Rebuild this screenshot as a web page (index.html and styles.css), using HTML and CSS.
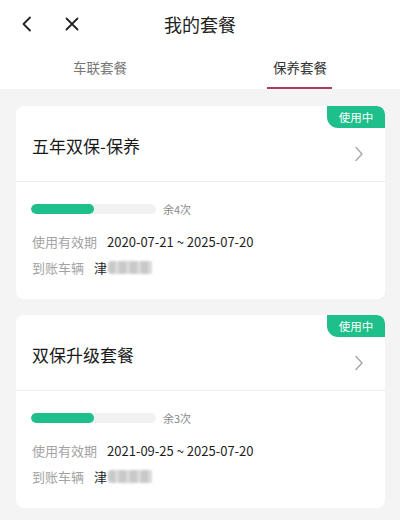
FILE: index.html
```html
<!DOCTYPE html>
<html lang="zh-CN">
<head>
    <meta charset="UTF-8">
    <title>我的套餐</title>
    <link rel="stylesheet" href="styles.css">
</head>
<body>

<div class="header">
    <div class="header-left">
        <svg class="icon" width="14" height="16" viewBox="0 0 14 16">
            <path d="M10 1.5 L3.5 8 L10 14.5" fill="none" stroke="#222" stroke-width="1.8" stroke-linecap="round" stroke-linejoin="round"/>
        </svg>
        <svg class="icon close" width="14" height="14" viewBox="0 0 14 14">
            <path d="M1.5 1.5 L12.5 12.5 M12.5 1.5 L1.5 12.5" fill="none" stroke="#222" stroke-width="1.8" stroke-linecap="round"/>
        </svg>
    </div>
    <div class="header-title">我的套餐</div>
    <div></div>
</div>

<div class="tabs">
    <div class="tab">车联套餐</div>
    <div class="tab active">保养套餐</div>
</div>

<div class="list">
    <div class="card">
        <span class="badge">使用中</span>
        <div class="card-top">
            <div class="card-title">五年双保-保养</div>
            <svg class="chevron" width="10" height="16" viewBox="0 0 10 16">
                <path d="M2 1.5 L8 8 L2 14.5" fill="none" stroke="#a6a6a6" stroke-width="1.4" stroke-linecap="round" stroke-linejoin="round"/>
            </svg>
        </div>
        <div class="card-body">
            <div class="progress-row">
                <div class="track"><div class="fill" style="width: 50%;"></div></div>
                <span class="remain">余4次</span>
            </div>
            <div class="info-row">
                <span class="label">使用有效期</span>
                <span class="value">2020-07-21 ~ 2025-07-20</span>
            </div>
            <div class="info-row">
                <span class="label">到账车辆</span>
                <span class="value">津<span class="masked"></span></span>
            </div>
        </div>
    </div>

    <div class="card">
        <span class="badge">使用中</span>
        <div class="card-top">
            <div class="card-title">双保升级套餐</div>
            <svg class="chevron" width="10" height="16" viewBox="0 0 10 16">
                <path d="M2 1.5 L8 8 L2 14.5" fill="none" stroke="#a6a6a6" stroke-width="1.4" stroke-linecap="round" stroke-linejoin="round"/>
            </svg>
        </div>
        <div class="card-body">
            <div class="progress-row">
                <div class="track"><div class="fill" style="width: 50%;"></div></div>
                <span class="remain">余3次</span>
            </div>
            <div class="info-row">
                <span class="label">使用有效期</span>
                <span class="value">2021-09-25 ~ 2025-07-20</span>
            </div>
            <div class="info-row">
                <span class="label">到账车辆</span>
                <span class="value">津<span class="masked"></span></span>
            </div>
        </div>
    </div>
</div>

</body>
</html>
```

FILE: styles.css
```css
body {
    margin: 0;
    font-family: "Noto Sans CJK SC", "Noto Sans", sans-serif;
    background-color: #f4f4f4;
    color: #222;
}
.header {
    display: grid;
    grid-template-columns: 1fr auto 1fr;
    align-items: center;
    height: 48px;
    background: #fff;
}
.header-left {
    display: flex;
    align-items: center;
    padding-left: 20px;
}
.icon {
    display: block;
}
.close {
    margin-left: 31px;
}
.header-title {
    font-size: 18px;
    line-height: 24px;
    color: #222;
}
.tabs {
    display: flex;
    height: 41px;
    background: #fff;
}
.tab {
    flex: 1;
    display: flex;
    justify-content: center;
    align-items: center;
    padding-bottom: 3px;
    font-size: 13.5px;
    color: #777;
}
.tab.active {
    color: #333;
    position: relative;
}
.tab.active::after {
    content: "";
    position: absolute;
    left: 50%;
    bottom: 0;
    width: 65px;
    margin-left: -33px;
    height: 2px;
    background: #a93c62;
}
.list {
    display: flex;
    flex-direction: column;
    gap: 16px;
    padding: 17px 15px 0 16px;
}
.card {
    position: relative;
    background: #fff;
    border-radius: 8px;
    overflow: hidden;
}
.badge {
    position: absolute;
    top: 0;
    right: 0;
    width: 58px;
    height: 22px;
    line-height: 22px;
    text-align: center;
    font-size: 11.5px;
    color: #fff;
    background: #1fbf8c;
    border-radius: 0 8px 0 11px;
}
.card-top {
    display: flex;
    justify-content: space-between;
    height: 76px;
    box-sizing: border-box;
    padding: 28px 21px 0 16px;
    border-bottom: 1px solid #ececec;
}
.card-title {
    font-size: 17px;
    line-height: 24px;
    color: #1a1a1a;
}
.chevron {
    margin-top: 12px;
}
.card-body {
    padding: 22px 16px 19px 15px;
}
.progress-row {
    display: flex;
    align-items: center;
    height: 10px;
    margin-bottom: 14px;
}
.track {
    width: 125px;
    height: 10px;
    border-radius: 5px;
    background: #f1f1f1;
    overflow: hidden;
}
.fill {
    height: 100%;
    border-radius: 5px;
    background: #1fbf8c;
}
.remain {
    margin-left: 7px;
    font-size: 11px;
    color: #888;
}
.info-row {
    display: flex;
    align-items: center;
    height: 26px;
    font-size: 13px;
}
.label {
    margin-left: 1px;
    margin-right: 10px;
    color: #a3a3a3;
}
.value {
    display: flex;
    align-items: center;
    color: #1e1e1e;
}
.masked {
    display: inline-block;
    width: 44px;
    height: 13px;
    margin-left: 1px;
    border-radius: 4px 2px 2px 4px;
    background: repeating-linear-gradient(90deg, #c9c9c9 0 7px, #dadada 7px 11px);
    filter: blur(0.8px);
}
```
